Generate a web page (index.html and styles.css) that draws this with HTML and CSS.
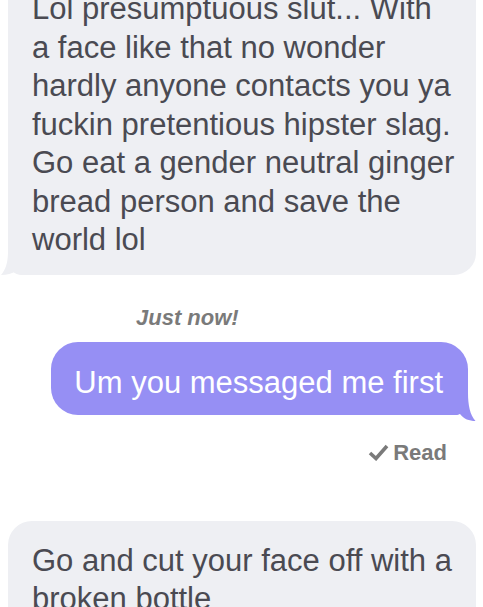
FILE: index.html
```html
<!DOCTYPE html>
<html>
<head>
<meta charset="utf-8">
<link rel="stylesheet" href="styles.css">
</head>
<body>
<div class="thread">
  <div class="bubble bubble-in first">
    Lol presumptuous slut... With<br>a face like that no wonder<br>hardly anyone contacts you ya<br>fuckin pretentious hipster slag.<br>Go eat a gender neutral ginger<br>bread person and save the<br>world lol
    <svg class="tail tail-left" width="22" height="24" viewBox="0 0 22 24"><path d="M22 0 L8 0 C8 11 6 18 1 24 C7 24 12 22.5 16 20 C18 22 20 24 22 24 Z" fill="#eeeff3"/></svg>
  </div>
  <div class="stamp">Just now!</div>
  <div class="out-row">
    <div class="bubble bubble-out">Um you messaged me first
      <svg class="tail tail-right" width="22" height="28" viewBox="0 0 22 28"><path d="M0 0 L14 0 C14 12 16 22 21.5 28 C15 28 10 26 6 21 C4 22 2 22 0 22 Z" fill="#968ff4"/></svg>
    </div>
  </div>
  <div class="receipt">
    <svg class="check" width="21" height="17" viewBox="0 0 21 17"><path d="M2 9 L8 14.5 L19 2" fill="none" stroke="#7a7a7a" stroke-width="3.6" stroke-linejoin="miter"/></svg>
    <span>Read</span>
  </div>
  <div class="bubble bubble-in last">Go and cut your face off with a<br>broken bottle</div>
</div>
</body>
</html>
```
FILE: styles.css
```css
html, body {
  margin: 0;
  padding: 0;
  background: #ffffff;
}
body {
  width: 483px;
  height: 607px;
  overflow: hidden;
  font-family: "Liberation Sans", Arial, sans-serif;
}
.thread {
  display: flex;
  flex-direction: column;
  margin-top: -25px;
}
.bubble {
  position: relative;
  font-size: 31px;
  line-height: 38.5px;
}
.bubble-in {
  background: #eeeff3;
  color: #4a4a52;
  margin: 0 7px 0 8px;
  padding: 15px 16px 15.5px 24px;
  border-radius: 22px;
}
.bubble-in.first {
  border-radius: 0 0 22px 14px;
}
.bubble-in.last {
  margin-top: 55px;
  padding-top: 21px;
  height: 120px;
  border-radius: 24px 24px 0 0;
}
.tail {
  position: absolute;
}
.tail-left {
  left: -8px;
  bottom: 0;
}
.tail-right {
  right: -8px;
  bottom: -6px;
}
.stamp {
  margin-top: 30px;
  padding-left: 136px;
  font-size: 22px;
  line-height: 26px;
  font-weight: bold;
  font-style: italic;
  color: #7a7a7a;
}
.out-row {
  display: flex;
  justify-content: flex-end;
  margin-top: 11px;
  padding-right: 15px;
}
.bubble-out {
  background: #968ff4;
  color: #ffffff;
  padding: 22px 25px 12px 23px;
  border-radius: 27px 27px 14px 27px;
  white-space: nowrap;
}
.receipt {
  display: flex;
  justify-content: flex-end;
  align-items: center;
  gap: 4px;
  margin-top: 25px;
  padding-right: 36px;
  font-size: 22px;
  line-height: 26px;
  font-weight: bold;
  color: #7a7a7a;
}
.check {
  display: block;
}
```
